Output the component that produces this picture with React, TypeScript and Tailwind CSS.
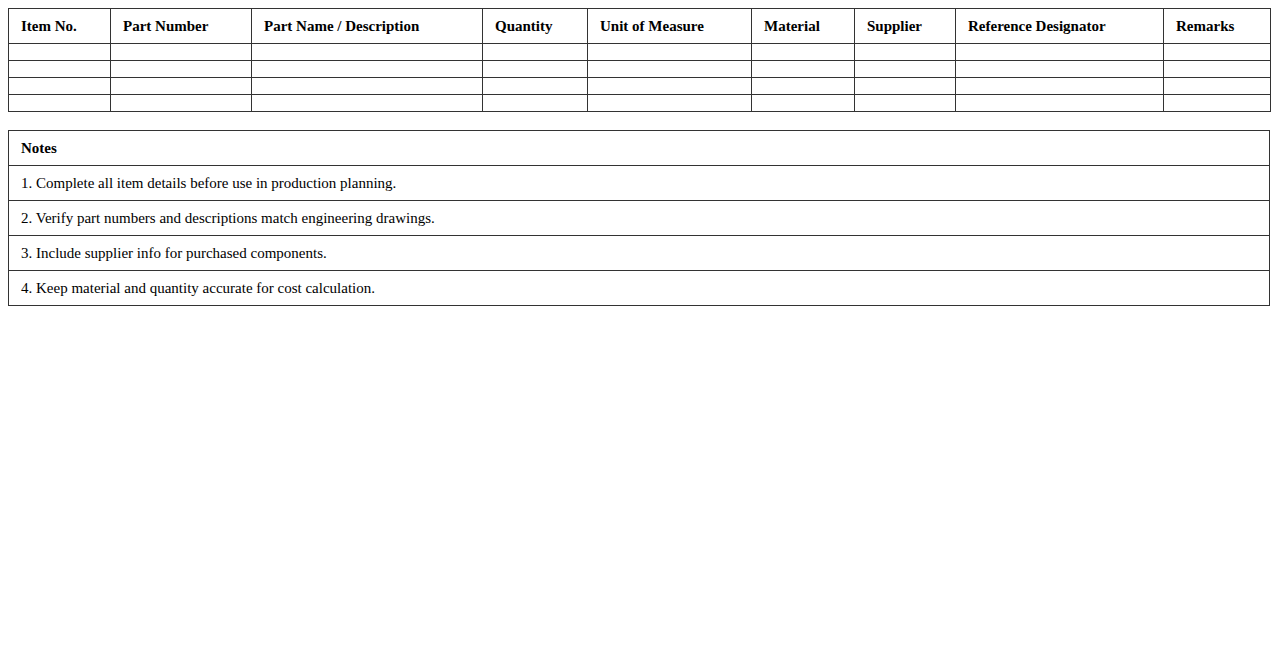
export default function App() {
  const cols = ["Item No.", "Part Number", "Part Name / Description", "Quantity", "Unit of Measure", "Material", "Supplier", "Reference Designator", "Remarks"];
  const widths = ["w-[102px]", "w-[141px]", "w-[231px]", "w-[105px]", "w-[164px]", "w-[103px]", "w-[101px]", "w-[208px]", "w-[107px]"];
  const notes = [
    "1. Complete all item details before use in production planning.",
    "2. Verify part numbers and descriptions match engineering drawings.",
    "3. Include supplier info for purchased components.",
    "4. Keep material and quantity accurate for cost calculation.",
  ];
  return (
    <div className="p-2 bg-white text-black text-[15px] leading-[18px]" style={{ fontFamily: '"Liberation Serif", "Times New Roman", serif' }}>
      <table className="w-full table-fixed border-collapse">
        <colgroup>
          {widths.map((w, i) => <col key={i} className={w} />)}
        </colgroup>
        <thead>
          <tr>
            {cols.map((c) => (
              <th key={c} className="border border-[#333] text-left font-bold px-3 h-[35px]">{c}</th>
            ))}
          </tr>
        </thead>
        <tbody>
          {[0, 1, 2, 3].map((r) => (
            <tr key={r}>
              {cols.map((c) => <td key={c} className="border border-[#333] h-[17px] p-0"></td>)}
            </tr>
          ))}
        </tbody>
      </table>
      <table className="w-full border-collapse mt-[18px]">
        <tbody>
          <tr><td className="border border-[#333] px-3 h-[35px] font-bold">Notes</td></tr>
          {notes.map((n) => (
            <tr key={n}><td className="border border-[#333] px-3 h-[35px]">{n}</td></tr>
          ))}
        </tbody>
      </table>
    </div>
  );
}
